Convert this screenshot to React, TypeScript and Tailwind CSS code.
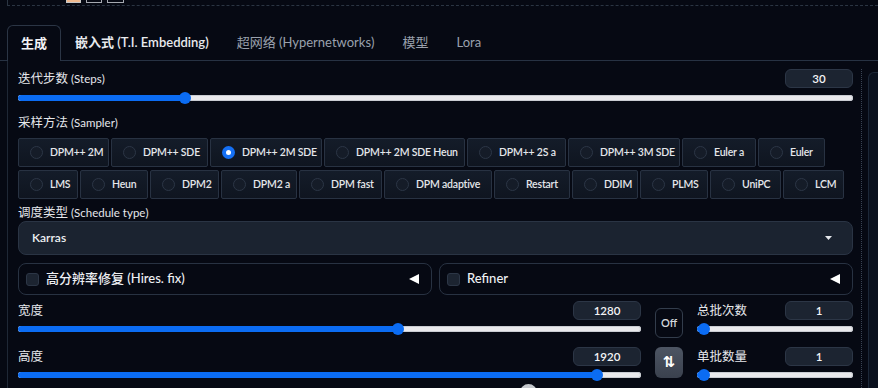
import React from "react";

const FONT = "font-['Lato','Noto_Sans_CJK_SC',sans-serif]";

const row1 = [
  { l: "DPM++ 2M", w: "w-[91px]" },
  { l: "DPM++ SDE", w: "w-[97px]" },
  { l: "DPM++ 2M SDE", w: "w-[112px]", on: true },
  { l: "DPM++ 2M SDE Heun", w: "w-[141px]" },
  { l: "DPM++ 2S a", w: "w-[99px]" },
  { l: "DPM++ 3M SDE", w: "w-[112px]" },
  { l: "Euler a", w: "w-[74px]" },
  { l: "Euler", w: "w-[67px]" },
];

const row2 = [
  { l: "LMS", w: "w-[60px]" },
  { l: "Heun", w: "w-[68px]" },
  { l: "DPM2", w: "w-[69px]" },
  { l: "DPM2 a", w: "w-[76px]" },
  { l: "DPM fast", w: "w-[83px]" },
  { l: "DPM adaptive", w: "w-[108px]" },
  { l: "Restart", w: "w-[76px]" },
  { l: "DDIM", w: "w-[66px]" },
  { l: "PLMS", w: "w-[68px]" },
  { l: "UniPC", w: "w-[71px]" },
  { l: "LCM", w: "w-[61px]" },
];

function Label({ cn, en }: { cn: string; en?: string }) {
  return (
    <span className="text-[12px] leading-[16px] text-[#e5e7eb] whitespace-nowrap">
      <span className="text-[12.5px]">{cn}</span>
      {en ? <span className="ml-[3px] text-[11.5px]">{en}</span> : null}
    </span>
  );
}

function NumBox({ v }: { v: string }) {
  return (
    <div className="w-[68px] h-[19px] shrink-0 rounded-[6px] bg-[#1c2431] border border-[#2c3646] flex items-center justify-center text-[11.5px] text-[#f3f4f6] font-semibold">
      {v}
    </div>
  );
}

function Slider({ fill, thumb }: { fill: string; thumb: string }) {
  return (
    <div className="relative h-[12px] flex items-center">
      <div className="h-[6px] w-full rounded-full bg-[#e9e9ec] shadow-[inset_0_0_0_1px_#c9ccd2] overflow-hidden">
        <div className={`h-full bg-[#0b6cf3] ${fill}`} />
      </div>
      <div className={`absolute top-0 w-[12px] h-[12px] rounded-full bg-[#0b6cf3] ${thumb}`} />
    </div>
  );
}

function Radio({ l, w, on }: { l: string; w: string; on?: boolean }) {
  return (
    <div
      className={`${w} h-[29px] shrink-0 flex items-center gap-[7px] pl-[11px] rounded-[2px] border border-[#283242] bg-[linear-gradient(#141c29,#0f1520)]`}
    >
      {on ? (
        <div className="w-[13px] h-[13px] shrink-0 rounded-full bg-[#1570f4] flex items-center justify-center">
          <div className="w-[5px] h-[5px] rounded-full bg-white" />
        </div>
      ) : (
        <div className="w-[13px] h-[13px] shrink-0 rounded-full bg-[#151c28] border border-[#2c3646]" />
      )}
      <span className="text-[10.5px] tracking-[-0.2px] font-semibold text-[#e5e7eb] whitespace-nowrap">{l}</span>
    </div>
  );
}

function Accordion({ text }: { text: string }) {
  return (
    <div className="flex-1 h-[32px] rounded-[8px] border border-[#283242] flex items-center pl-[7px] pr-[12px]">
      <div className="w-[13px] h-[13px] shrink-0 rounded-[3px] bg-[#1c2431] border border-[#2c3646]" />
      <span className="ml-[7px] text-[13px] font-medium text-[#eef0f3]">{text}</span>
      <svg className="ml-auto" width="10" height="10" viewBox="0 0 10 10">
        <polygon points="0,5 10,0 10,10" fill="#ffffff" />
      </svg>
    </div>
  );
}

export default function App() {
  return (
    <div className={`w-[878px] h-[388px] overflow-hidden bg-[#060913] ${FONT}`}>
      {/* top strip */}
      <div className="h-[6px] ml-[7px] border-l border-b border-dashed border-[#2b3543] flex items-start pl-[58px] gap-[5px]">
        <div className="w-[15px] h-[3px] bg-[#efb98f] border border-t-0 border-[#c7c7c7]" />
        <div className="w-[16px] h-[3px] border border-t-0 border-[#a5a9b1]" />
        <div className="w-[17px] h-[3px] border border-t-0 border-[#a5a9b1]" />
      </div>

      {/* tabs */}
      <div className="mt-[19px] h-[36px] flex items-start border-b border-[#273243] pl-[7px]">
        <div className="h-[36px] -mb-px px-[13px] flex items-center border-t border-x border-[#2b3545] rounded-t-[6px] bg-[#060913] text-[13px] font-semibold text-[#f3f4f6]">
          生成
        </div>
        <div className="h-[35px] px-[14px] flex items-center text-[13px] font-semibold text-[#e8eaee]">
          嵌入式 (T.I. Embedding)
        </div>
        <div className="h-[35px] px-[14px] flex items-center text-[13px] text-[#9aa1ad]">
          超网络 (Hypernetworks)
        </div>
        <div className="h-[35px] px-[14px] flex items-center text-[13px] text-[#9aa1ad]">模型</div>
        <div className="h-[35px] px-[14px] flex items-center text-[13px] text-[#9aa1ad]">Lora</div>
      </div>

      {/* body */}
      <div className="ml-[7px] flex">
        <div className="w-[854px] shrink-0 border-l border-[#1f2836] pl-[10px] pr-[8px] pt-[8px] flex flex-col">
          <div className="h-[19px] flex items-center justify-between">
            <Label cn="迭代步数" en="(Steps)" />
            <NumBox v="30" />
          </div>
          <div className="mt-[4px]">
            <Slider fill="w-[20%]" thumb="left-[calc(20%-6px)]" />
          </div>

          <div className="mt-[11px] h-[16px] flex items-center">
            <Label cn="采样方法" en="(Sampler)" />
          </div>
          <div className="mt-[7px] flex flex-col gap-[3px]">
            <div className="flex gap-[2px]">
              {row1.map((r) => (
                <Radio key={r.l} {...r} />
              ))}
            </div>
            <div className="flex gap-[2px]">
              {row2.map((r) => (
                <Radio key={r.l} {...r} />
              ))}
            </div>
          </div>

          <div className="mt-[6px] h-[16px] flex items-center">
            <Label cn="调度类型" en="(Schedule type)" />
          </div>
          <div className="h-[34px] shrink-0 rounded-[8px] bg-[#1b2330] border border-[#2a3444] flex items-center pl-[13px] pr-[20px]">
            <span className="text-[12px] font-semibold text-[#eef0f3]">Karras</span>
            <svg className="ml-auto" width="7" height="4" viewBox="0 0 7 4">
              <polygon points="0,0 7,0 3.5,4" fill="#e5e7eb" />
            </svg>
          </div>

          <div className="mt-[8px] flex gap-[7px]">
            <Accordion text="高分辨率修复 (Hires. fix)" />
            <Accordion text="Refiner" />
          </div>

          <div className="mt-[6px] flex gap-[14px]">
            <div className="w-[623px] shrink-0 flex flex-col">
              <div className="h-[19px] flex items-center justify-between">
                <Label cn="宽度" />
                <NumBox v="1280" />
              </div>
              <div className="mt-[3px]">
                <Slider fill="w-[61%]" thumb="left-[calc(61%-6px)]" />
              </div>
              <div className="mt-[12px] h-[19px] flex items-center justify-between">
                <Label cn="高度" />
                <NumBox v="1920" />
              </div>
              <div className="mt-[3px]">
                <Slider fill="w-[93%]" thumb="left-[calc(93%-6px)]" />
              </div>
            </div>

            <div className="w-[28px] shrink-0 flex flex-col pt-[7px] gap-[9px]">
              <div className="h-[30px] rounded-[6px] border border-[#333d4c] flex items-center justify-center text-[11px] font-semibold text-[#d4d7dc]">
                Off
              </div>
              <div className="h-[31px] rounded-[6px] bg-[linear-gradient(#4d5563,#3a414e)] flex items-center justify-center text-[15px] font-bold text-white font-['DejaVu_Sans',sans-serif]">
                ⇅
              </div>
            </div>

            <div className="flex-1 flex flex-col">
              <div className="h-[19px] flex items-center justify-between">
                <Label cn="总批次数" />
                <NumBox v="1" />
              </div>
              <div className="mt-[3px]">
                <Slider fill="w-[4%]" thumb="left-[1px]" />
              </div>
              <div className="mt-[12px] h-[19px] flex items-center justify-between">
                <Label cn="单批数量" />
                <NumBox v="1" />
              </div>
              <div className="mt-[3px]">
                <Slider fill="w-[4%]" thumb="left-[1px]" />
              </div>
            </div>
          </div>

          <div className="mt-[3px] pl-[502px] h-[40px]">
            <div className="w-[17px] h-[17px] rounded-full bg-[#c4c7cc]" />
          </div>
        </div>

        <div className="w-0 mt-[8px] border-l border-dotted border-[#3a4454]" />
        <div className="flex-1 ml-[6px] mt-[11px] rounded-tl-[6px] border-l border-t border-[#1c2737] bg-[#0a111e]" />
      </div>
    </div>
  );
}
